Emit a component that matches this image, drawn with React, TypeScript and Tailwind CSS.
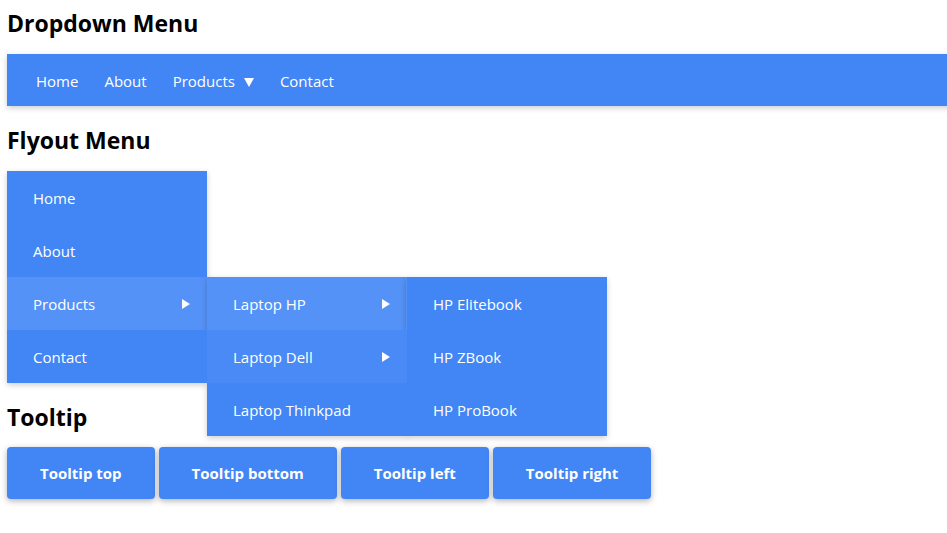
import React from "react";

const font = { fontFamily: '"Open Sans", "Noto Sans", sans-serif' };

function Caret({ dir }: { dir: "down" | "right" }) {
  if (dir === "down") {
    return (
      <svg width="10" height="9" viewBox="0 0 10 9" className="ml-[9px] mt-[2px]">
        <polygon points="0,0 10,0 5,9" fill="white" />
      </svg>
    );
  }
  return (
    <svg width="8" height="10" viewBox="0 0 8 10">
      <polygon points="0,0 8,5 0,10" fill="white" />
    </svg>
  );
}

function Row({
  label,
  arrow,
  tone = "base",
  children,
}: {
  label: string;
  arrow?: boolean;
  tone?: "base" | "hover" | "fade";
  children?: React.ReactNode;
}) {
  const bg =
    tone === "hover" ? "bg-[#5592f7]" : tone === "fade" ? "bg-[#4a8af6]" : "bg-[#4285f4]";
  return (
    <li className={`relative flex h-[53px] items-center justify-between pt-[1px] pl-[26px] pr-[17px] ${bg}`}>
      <span className="text-[15px] text-white">{label}</span>
      {arrow && <Caret dir="right" />}
      {children}
    </li>
  );
}

export default function App() {
  const tips = ["Tooltip top", "Tooltip bottom", "Tooltip left", "Tooltip right"];
  return (
    <div className="min-h-[533px] overflow-hidden bg-white pl-[7px] text-black" style={font}>
      {/* Dropdown */}
      <h2 className="pt-[5px] pb-[13px] text-[23px] font-bold leading-[36px]">Dropdown Menu</h2>
      <nav className="flex h-[52px] w-[1000px] items-center bg-[#4285f4] pt-[2px] pl-[16px] shadow-[0_2px_6px_rgba(0,0,0,0.2)]">
        {["Home", "About", "Products", "Contact"].map((item) => (
          <a key={item} className="flex items-center px-[13px] text-[15px] text-white">
            {item}
            {item === "Products" && <Caret dir="down" />}
          </a>
        ))}
      </nav>

      {/* Flyout */}
      <h2 className="pt-[15px] pb-[12px] text-[23px] font-bold leading-[38px]">Flyout Menu</h2>
      <ul className="relative z-10 w-[200px] shadow-[0_2px_6px_rgba(0,0,0,0.2)]">
        <Row label="Home" />
        <Row label="About" />
        <Row label="Products" arrow tone="hover">
          <ul className="absolute top-0 left-[200px] w-[200px] shadow-[0_2px_6px_rgba(0,0,0,0.2)]">
            <Row label="Laptop HP" arrow tone="hover">
              <ul className="absolute top-0 left-[199px] w-[201px] border-l border-white/10 bg-[#4285f4] shadow-[0_2px_6px_rgba(0,0,0,0.2)]">
                <Row label="HP Elitebook" />
                <Row label="HP ZBook" />
                <Row label="HP ProBook" />
              </ul>
            </Row>
            <Row label="Laptop Dell" arrow tone="fade" />
            <Row label="Laptop Thinkpad" />
          </ul>
        </Row>
        <Row label="Contact" />
      </ul>

      {/* Tooltip */}
      <h2 className="pt-[16px] pb-[12px] text-[23px] font-bold leading-[36px]">Tooltip</h2>
      <div className="flex gap-[4px]">
        {tips.map((t) => (
          <button
            key={t}
            className="h-[52px] rounded-[4px] bg-[#4285f4] px-[33px] text-[15px] font-bold text-white shadow-[0_2px_6px_rgba(0,0,0,0.3)]"
          >
            {t}
          </button>
        ))}
      </div>
    </div>
  );
}
